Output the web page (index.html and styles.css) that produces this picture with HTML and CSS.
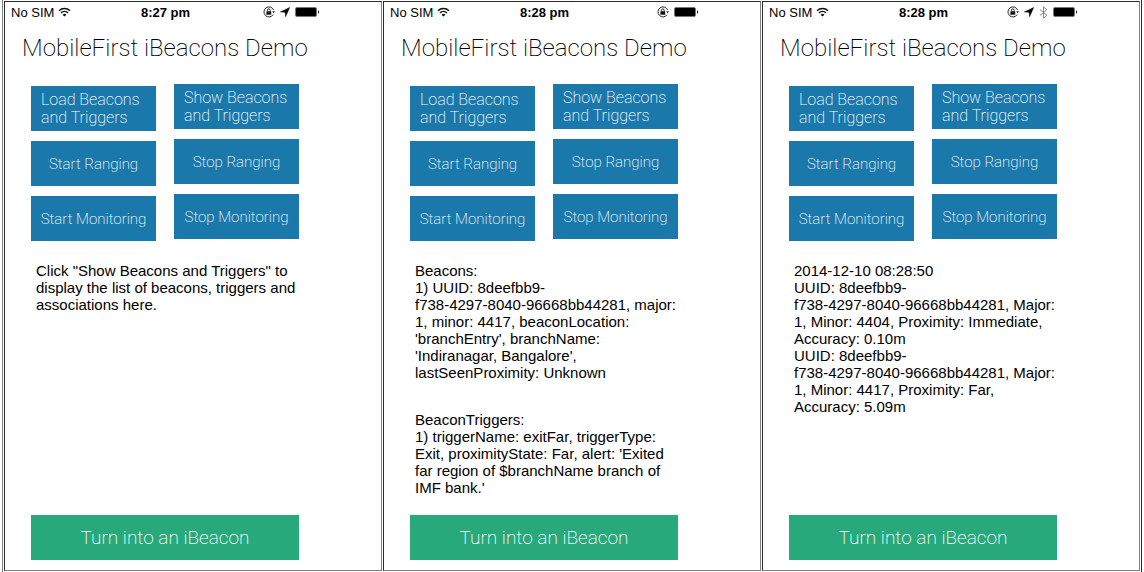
FILE: index.html
```
<!DOCTYPE html>
<html lang="en">
<head>
<meta charset="utf-8">
<title>MobileFirst iBeacons Demo</title>
<link rel="stylesheet" href="styles.css">
</head>
<body>
<svg width="0" height="0" class="symbols" aria-hidden="true">
  <symbol id="wifi" viewBox="0 0 13 10">
    <path d="M1 3.7a7.8 7.8 0 0 1 11 0M3 5.9a5 5 0 0 1 7 0" fill="none" stroke="#111" stroke-width="1.5"/>
    <path d="M6.5 9.6 4.6 7.7a2.7 2.7 0 0 1 3.8 0z" fill="#111"/>
  </symbol>
  <symbol id="lock" viewBox="0 0 12 12">
    <path d="M10.6 4A5 5 0 1 0 10.2 8.600" fill="none" stroke="#222" stroke-width="1"/>
    <path d="M9.200 5.300h2.700l-1.300 2z" fill="#111"/>
    <rect x="3.400" y="5.300" width="4.800" height="3.500" rx=".4" fill="#111"/>
    <path d="M4.400 5.500V4.300a1.400 1.400 0 0 1 2.800 0v1.200" fill="none" stroke="#111" stroke-width=".9"/>
  </symbol>
  <symbol id="arrow" viewBox="0 0 10 10">
    <path d="M9.700.4 5.700 9.800 5 5.300 .2 4.900z" fill="#000" stroke="#000" stroke-width=".4"/>
  </symbol>
  <symbol id="bluetooth" viewBox="0 0 9 13">
    <path d="M1 3.600 7.800 9.300 4.500 12.200V.8L7.800 3.700 1 9.400" fill="none" stroke="#888" stroke-width="1"/>
  </symbol>
  <symbol id="battery" viewBox="0 0 25 10">
    <rect x=".5" y=".5" width="21" height="9" rx="1.500" fill="#000" stroke="#777"/>
    <path d="M23 3.200a2 2 0 0 1 0 3.600z" fill="#111"/>
  </symbol>
</svg>
<main class="board">
  <section class="panel">
    <div class="screen">
      <header class="status">
        <span class="carrier">No SIM <svg class="wifi"><use href="#wifi"/></svg></span>
        <time class="clock">8:27 pm</time>
        <span class="indicators"><svg class="lock"><use href="#lock"/></svg><svg class="arrow"><use href="#arrow"/></svg><svg class="battery"><use href="#battery"/></svg></span>
      </header>
      <h1 class="title">MobileFirst iBeacons Demo</h1>
      <div class="actions">
        <div class="column column-start">
          <button class="action two-line" type="button">Load Beacons<br>and Triggers</button>
          <button class="action" type="button">Start Ranging</button>
          <button class="action" type="button">Start Monitoring</button>
        </div>
        <div class="column">
          <button class="action two-line" type="button">Show Beacons<br>and Triggers</button>
          <button class="action" type="button">Stop Ranging</button>
          <button class="action" type="button">Stop Monitoring</button>
        </div>
      </div>
      <div class="log">
        <p>Click "Show Beacons and Triggers" to<br>display the list of beacons, triggers and<br>associations here.</p>
      </div>
      <button class="turn" type="button">Turn into an iBeacon</button>
    </div>
  </section>
  <section class="panel">
    <div class="screen">
      <header class="status">
        <span class="carrier">No SIM <svg class="wifi"><use href="#wifi"/></svg></span>
        <time class="clock">8:28 pm</time>
        <span class="indicators"><svg class="lock"><use href="#lock"/></svg><svg class="battery"><use href="#battery"/></svg></span>
      </header>
      <h1 class="title">MobileFirst iBeacons Demo</h1>
      <div class="actions">
        <div class="column column-start">
          <button class="action two-line" type="button">Load Beacons<br>and Triggers</button>
          <button class="action" type="button">Start Ranging</button>
          <button class="action" type="button">Start Monitoring</button>
        </div>
        <div class="column">
          <button class="action two-line" type="button">Show Beacons<br>and Triggers</button>
          <button class="action" type="button">Stop Ranging</button>
          <button class="action" type="button">Stop Monitoring</button>
        </div>
      </div>
      <div class="log">
        <p>Beacons:<br>1) UUID: 8deefbb9-<br>f738-4297-8040-96668bb44281, major:<br>1, minor: 4417, beaconLocation:<br>'branchEntry', branchName:<br>'Indiranagar, Bangalore',<br>lastSeenProximity: Unknown</p>
        <p>BeaconTriggers:<br>1) triggerName: exitFar, triggerType:<br>Exit, proximityState: Far, alert: 'Exited<br>far region of $branchName branch of<br>IMF bank.'</p>
      </div>
      <button class="turn" type="button">Turn into an iBeacon</button>
    </div>
  </section>
  <section class="panel">
    <div class="screen">
      <header class="status">
        <span class="carrier">No SIM <svg class="wifi"><use href="#wifi"/></svg></span>
        <time class="clock">8:28 pm</time>
        <span class="indicators"><svg class="lock"><use href="#lock"/></svg><svg class="arrow"><use href="#arrow"/></svg><svg class="bluetooth"><use href="#bluetooth"/></svg><svg class="battery"><use href="#battery"/></svg></span>
      </header>
      <h1 class="title">MobileFirst iBeacons Demo</h1>
      <div class="actions">
        <div class="column column-start">
          <button class="action two-line" type="button">Load Beacons<br>and Triggers</button>
          <button class="action" type="button">Start Ranging</button>
          <button class="action" type="button">Start Monitoring</button>
        </div>
        <div class="column">
          <button class="action two-line" type="button">Show Beacons<br>and Triggers</button>
          <button class="action" type="button">Stop Ranging</button>
          <button class="action" type="button">Stop Monitoring</button>
        </div>
      </div>
      <div class="log">
        <p>2014-12-10 08:28:50<br>UUID: 8deefbb9-<br>f738-4297-8040-96668bb44281, Major:<br>1, Minor: 4404, Proximity: Immediate,<br>Accuracy: 0.10m<br>UUID: 8deefbb9-<br>f738-4297-8040-96668bb44281, Major:<br>1, Minor: 4417, Proximity: Far,<br>Accuracy: 5.09m</p>
      </div>
      <button class="turn" type="button">Turn into an iBeacon</button>
    </div>
  </section>
</main>
</body>
</html>
```
FILE: styles.css
```
* {
  box-sizing: border-box;
}

body {
  margin: 0;
  background: #fff;
  color: #000;
  font-family: "Liberation Sans", Arial, sans-serif;
}

.symbols {
  position: absolute;
}

.board {
  display: grid;
  grid-template-columns: repeat(3, 1fr);
  gap: 1px;
  min-height: 100vh;
  margin: 0 2px;
  padding: 1px;
  border-left: 1px solid #808080;
  border-right: 1px solid #2c2c2c;
}

.panel {
  display: flex;
  border: 1px solid;
  border-color: #2c2c2c #808080 #808080 #2c2c2c;
}

.screen {
  display: flex;
  flex-direction: column;
  flex: 1;
  max-width: 320px;
  padding-bottom: 10px;
}

.status {
  display: grid;
  grid-template-columns: 1fr auto 1fr;
  align-items: center;
  height: 20px;
  padding: 0 5px 0 6px;
  font-size: 13px;
}

.carrier,
.indicators {
  display: flex;
  align-items: center;
  gap: 4px;
}

.indicators {
  gap: 5px;
  justify-content: flex-end;
}

.clock {
  font-weight: 700;
}

.wifi {
  width: 13px;
  height: 10px;
}

.lock {
  width: 12px;
  height: 12px;
}

.arrow {
  width: 10px;
  height: 10px;
}

.bluetooth {
  width: 9px;
  height: 13px;
}

.battery {
  width: 25px;
  height: 10px;
}

.title {
  margin: 10px 0 0 17px;
  font-family: Roboto, sans-serif;
  font-size: 24px;
  font-weight: 200;
  line-height: 32px;
  white-space: nowrap;
}

.actions {
  display: grid;
  grid-template-columns: 1fr 1fr;
  gap: 18px;
  margin: 20px 26px 0;
}

.column {
  display: flex;
  flex-direction: column;
  gap: 10px;
}

.column-start {
  padding-top: 2px;
}

.action,
.turn {
  display: flex;
  align-items: center;
  justify-content: center;
  height: 45px;
  padding: 0;
  border: 0;
  color: #fff;
  font-family: Roboto, sans-serif;
  font-weight: 200;
  white-space: nowrap;
}

.action {
  background: #1a78ab;
  font-size: 15px;
  line-height: 18px;
}

.two-line {
  display: block;
  padding-left: 10px;
  font-size: 16px;
  text-align: left;
}

.turn {
  margin: auto 26px 0;
  background: #27a97b;
  font-size: 19px;
}

.log {
  margin: 21px 0 10px 31px;
  font-size: 15px;
  line-height: 17px;
  white-space: nowrap;
}

.log p {
  margin: 0 0 30px;
}

.log p:last-child {
  margin: 0;
}
```
